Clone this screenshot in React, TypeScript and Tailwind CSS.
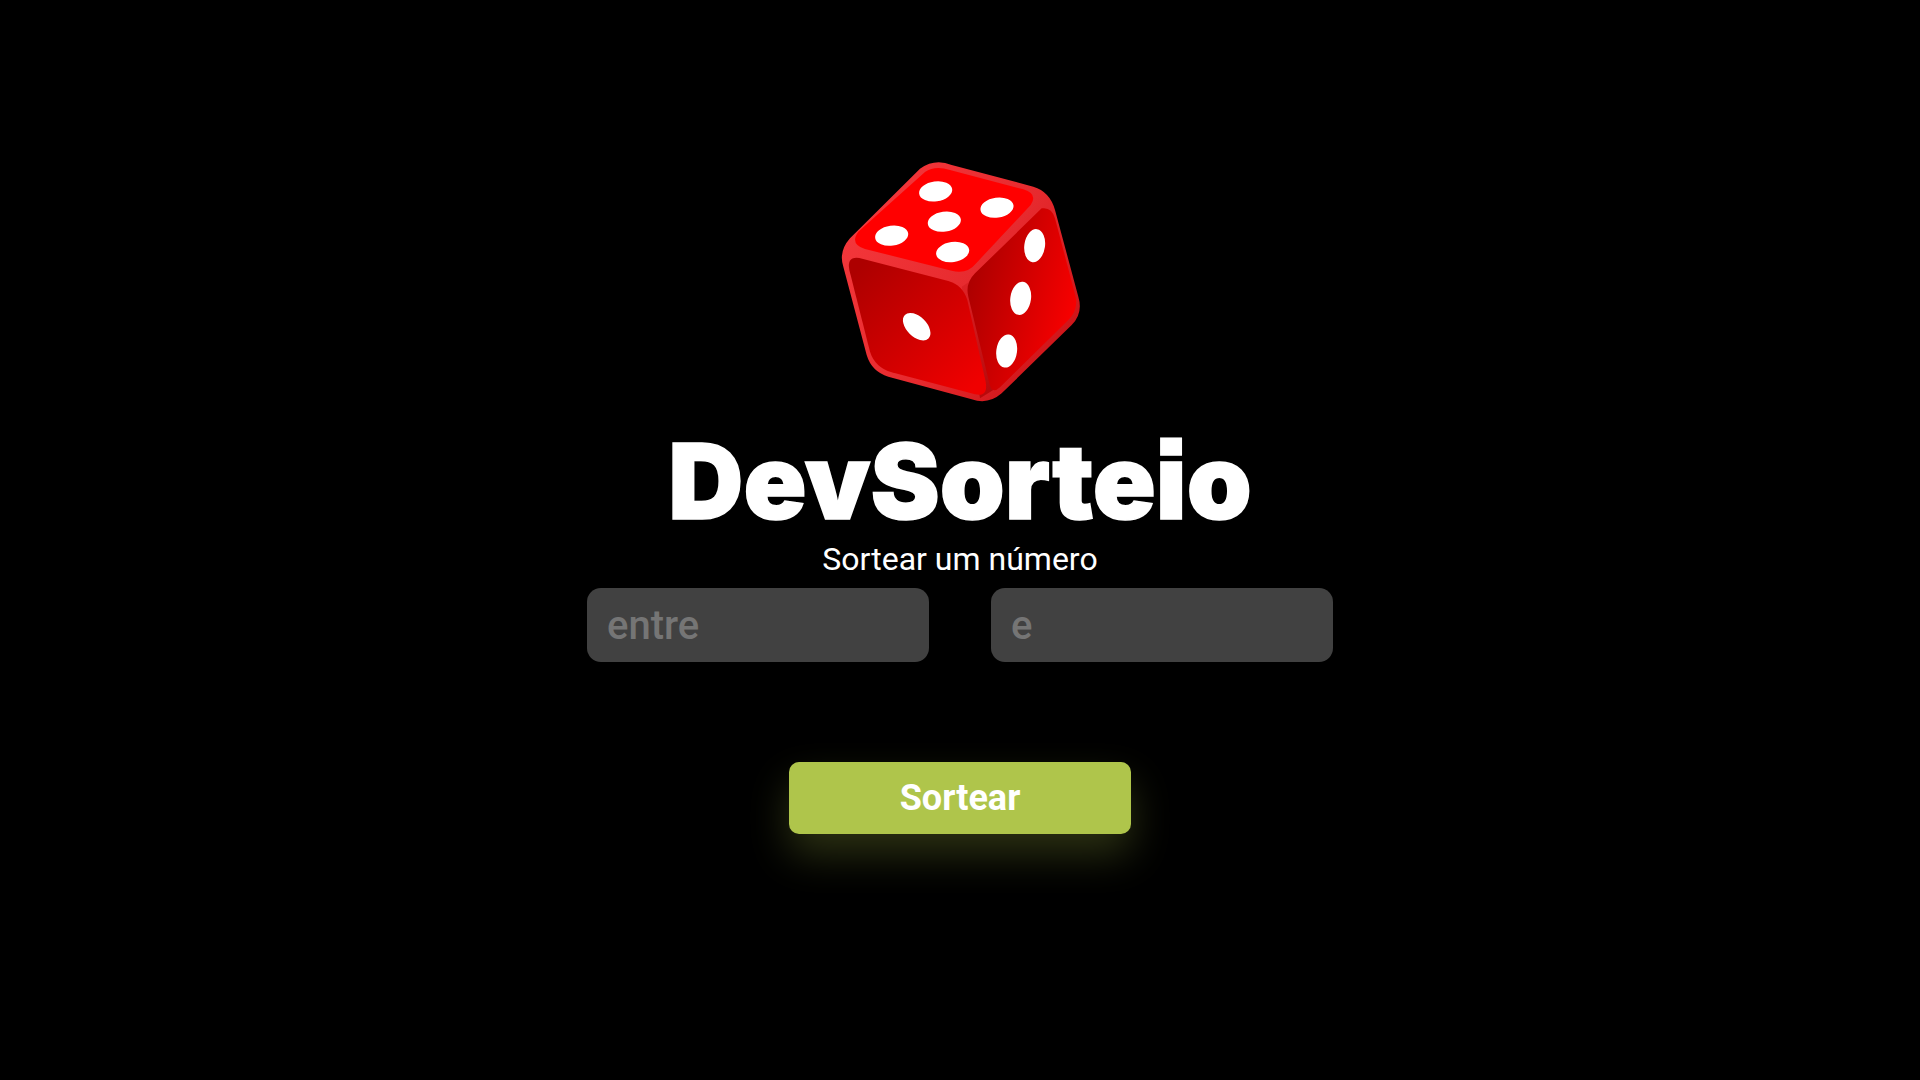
const Dice = () => (
  <svg viewBox="0 0 840 780" className="w-[280px] h-[260px]">
    <defs>
      <linearGradient id="body" x1="0" y1="0.2" x2="1" y2="0.85">
        <stop offset="0" stopColor="#f5383c" />
        <stop offset="0.55" stopColor="#e62a2e" />
        <stop offset="1" stopColor="#c81014" />
      </linearGradient>
      <linearGradient id="seam" x1="0" y1="0" x2="0.1" y2="1">
        <stop offset="0" stopColor="#e02428" />
        <stop offset="1" stopColor="#b80a0c" />
      </linearGradient>
      <linearGradient id="left" x1="0.05" y1="0.1" x2="0.9" y2="0.95">
        <stop offset="0" stopColor="#ad0000" />
        <stop offset="1" stopColor="#f00000" />
      </linearGradient>
      <linearGradient id="right" x1="0" y1="0.3" x2="1" y2="0.75">
        <stop offset="0" stopColor="#a80000" />
        <stop offset="1" stopColor="#ff0000" />
      </linearGradient>
    </defs>
    <path
      d="M300 56Q345 24 395 45L640 110Q690 125 705 180L775 440Q790 490 755 525L545 730Q505 765 455 748L205 680Q155 665 140 615L70 350Q55 305 90 265Z"
      fill="url(#body)"
    />
    <path d="M425 410L470 380L520 720L480 745Z" fill="url(#seam)" />
    <path
      d="M315 66Q345 45 390 60L610 118Q655 132 632 165L470 338Q440 375 395 362L135 297Q88 282 115 245Z"
      fill="#ff0000"
    />
    <path
      d="M118 324L385 393Q428 405 442 450L497 695Q505 742 465 733L215 667Q165 652 150 605L88 360Q80 318 118 324Z"
      fill="url(#left)"
    />
    <path
      d="M665 175Q695 170 705 205L767 440Q775 480 745 510L540 712Q515 735 508 700L445 440Q435 400 465 370Z"
      fill="url(#right)"
    />
    <g fill="#fff">
      <ellipse cx="347" cy="124" rx="50" ry="30" transform="rotate(-8 347 124)" />
      <ellipse cx="531" cy="173" rx="50" ry="30" transform="rotate(-8 531 173)" />
      <ellipse cx="373" cy="215" rx="50" ry="30" transform="rotate(-8 373 215)" />
      <ellipse cx="215" cy="257" rx="50" ry="30" transform="rotate(-8 215 257)" />
      <ellipse cx="398" cy="306" rx="50" ry="30" transform="rotate(-8 398 306)" />
      <ellipse cx="644" cy="287" rx="31" ry="50" transform="rotate(8 644 287)" />
      <ellipse cx="602" cy="445" rx="31" ry="50" transform="rotate(8 602 445)" />
      <ellipse cx="560" cy="603" rx="31" ry="50" transform="rotate(8 560 603)" />
      <ellipse cx="290" cy="530" rx="50" ry="30" transform="rotate(45 290 530)" />
    </g>
  </svg>
);

export default function App() {
  return (
    <div className="min-h-screen bg-black flex flex-col items-center pt-[150px] font-['Roboto',sans-serif] text-white">
      <Dice />
      <h1 className="font-['Inter',sans-serif] font-black text-[104px] leading-[116px] mt-[13px] [-webkit-text-stroke:1.5px_white] [font-feature-settings:'ss07']">
        DevSorteio
      </h1>
      <p className="text-[32px] leading-[37px] mt-[2px]">Sortear um número</p>
      <div className="flex gap-[62px] mt-[10px]">
        <input
          placeholder="entre"
          className="w-[342px] h-[74px] rounded-[14px] bg-[#414141] px-[20px] text-[40px] font-medium outline-none placeholder:text-[#757575]"
        />
        <input
          placeholder="e"
          className="w-[342px] h-[74px] rounded-[14px] bg-[#414141] px-[20px] text-[40px] font-medium outline-none placeholder:text-[#757575]"
        />
      </div>
      <button className="mt-[100px] w-[342px] h-[72px] rounded-[10px] bg-[#afc54b] text-[36px] font-bold text-white shadow-[0_20px_40px_rgba(175,197,75,0.25)]">
        Sortear
      </button>
    </div>
  );
}
